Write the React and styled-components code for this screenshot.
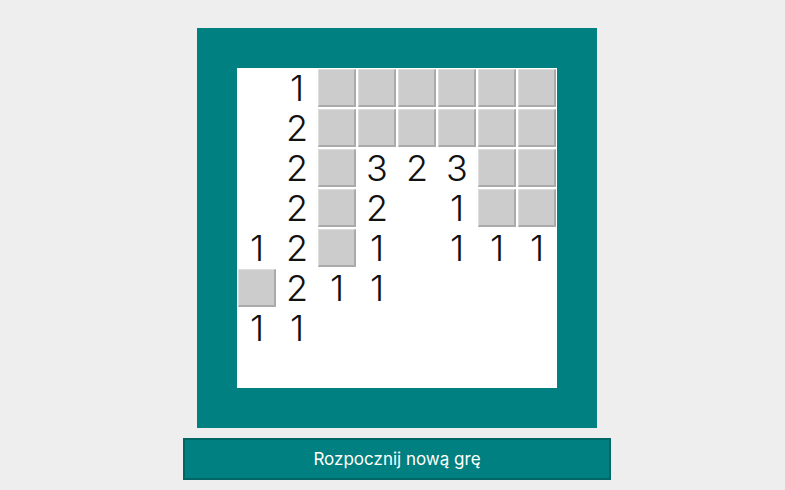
import styled, { createGlobalStyle } from "styled-components";

const GlobalStyle = createGlobalStyle`
    body {
        margin: 0;
        background: #eeeeee;
        font-family: "Inter", "Open Sans", sans-serif;
    }
`;

const Page = styled.div`
    width: 785px;
    box-sizing: border-box;
    padding: 28px 0 0 9px;
    display: flex;
    flex-direction: column;
    align-items: center;
    gap: 10px;
`;

const Board = styled.div`
    width: 400px;
    height: 400px;
    box-sizing: border-box;
    padding: 40px;
    background: #008080;
`;

const Grid = styled.div`
    width: 320px;
    height: 320px;
    background: #ffffff;
    display: grid;
    grid-template-columns: repeat(8, 40px);
    grid-template-rows: repeat(8, 40px);
`;

const Cell = styled.div`
    display: flex;
    align-items: center;
    justify-content: center;
    font-size: 36px;
    font-weight: 300;
    color: #111;
    line-height: 1;
`;

const Hidden = styled.div`
    margin: 1px;
    background: #cccccc;
    border-top: 1px solid #dddddd;
    border-left: 1px solid #dddddd;
    border-right: 2px solid #aaaaaa;
    border-bottom: 2px solid #aaaaaa;
`;

const NewGameButton = styled.button`
    width: 428px;
    height: 42px;
    background: #008080;
    border: 2px solid #006666;
    color: #ffffff;
    font-family: "Inter", "Open Sans", sans-serif;
    font-size: 17px;
    font-weight: 400;
    cursor: pointer;
`;

// "#" = hidden tile, "." = empty revealed tile, digit = count
const layout = [
    ".1######",
    ".2######",
    ".2#323##",
    ".2#2.1##",
    "12#1.111",
    "#211....",
    "11......",
    "........",
];

export default function App() {
    return (
        <>
            <GlobalStyle />
            <Page>
                <Board>
                    <Grid>
                        {layout.map((row, r) =>
                            row.split("").map((ch, c) =>
                                ch === "#" ? (
                                    <Hidden key={`${r}-${c}`} />
                                ) : (
                                    <Cell key={`${r}-${c}`}>
                                        {ch === "." ? "" : ch}
                                    </Cell>
                                )
                            )
                        )}
                    </Grid>
                </Board>
                <NewGameButton>Rozpocznij nową grę</NewGameButton>
            </Page>
        </>
    );
}
